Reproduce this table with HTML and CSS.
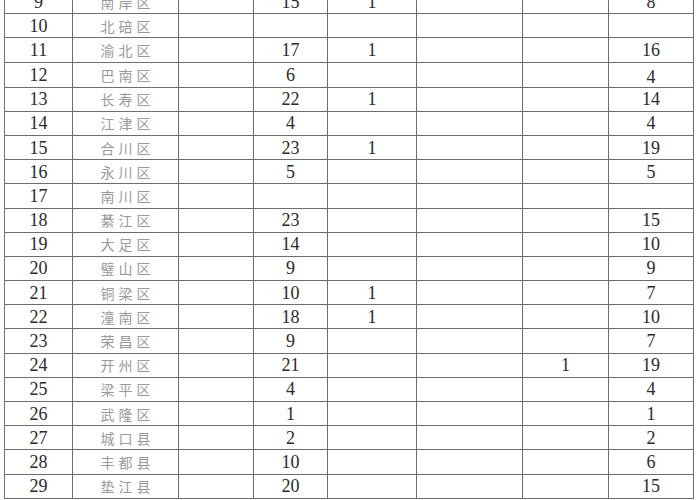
FILE: index.html
```html
<!DOCTYPE html>
<html lang="zh">
<head>
<meta charset="utf-8">
<link rel="stylesheet" href="styles.css">
</head>
<body>
<table class="grid">
<colgroup>
<col class="c-no"><col class="c-name"><col class="c-a"><col class="c-b"><col class="c-c"><col class="c-d"><col class="c-e"><col class="c-f">
</colgroup>
<tbody>
<tr><td>9</td><td class="nm">南岸区</td><td></td><td>15</td><td>1</td><td></td><td></td><td>8</td></tr>
<tr><td>10</td><td class="nm">北碚区</td><td></td><td></td><td></td><td></td><td></td><td></td></tr>
<tr><td>11</td><td class="nm">渝北区</td><td></td><td>17</td><td>1</td><td></td><td></td><td>16</td></tr>
<tr><td>12</td><td class="nm">巴南区</td><td></td><td>6</td><td></td><td></td><td></td><td class="low">4</td></tr>
<tr><td>13</td><td class="nm">长寿区</td><td></td><td>22</td><td>1</td><td></td><td></td><td>14</td></tr>
<tr><td>14</td><td class="nm">江津区</td><td></td><td>4</td><td></td><td></td><td></td><td>4</td></tr>
<tr><td>15</td><td class="nm">合川区</td><td></td><td>23</td><td>1</td><td></td><td></td><td>19</td></tr>
<tr><td>16</td><td class="nm">永川区</td><td></td><td>5</td><td></td><td></td><td></td><td>5</td></tr>
<tr><td>17</td><td class="nm">南川区</td><td></td><td></td><td></td><td></td><td></td><td></td></tr>
<tr><td>18</td><td class="nm">綦江区</td><td></td><td>23</td><td></td><td></td><td></td><td>15</td></tr>
<tr><td>19</td><td class="nm">大足区</td><td></td><td>14</td><td></td><td></td><td></td><td>10</td></tr>
<tr><td>20</td><td class="nm">璧山区</td><td></td><td>9</td><td></td><td></td><td></td><td>9</td></tr>
<tr><td>21</td><td class="nm">铜梁区</td><td></td><td>10</td><td>1</td><td></td><td></td><td>7</td></tr>
<tr><td>22</td><td class="nm">潼南区</td><td></td><td>18</td><td>1</td><td></td><td></td><td>10</td></tr>
<tr><td>23</td><td class="nm">荣昌区</td><td></td><td>9</td><td></td><td></td><td></td><td>7</td></tr>
<tr><td>24</td><td class="nm">开州区</td><td></td><td>21</td><td></td><td></td><td>1</td><td>19</td></tr>
<tr><td>25</td><td class="nm">梁平区</td><td></td><td>4</td><td></td><td></td><td></td><td>4</td></tr>
<tr><td>26</td><td class="nm">武隆区</td><td></td><td>1</td><td></td><td></td><td></td><td>1</td></tr>
<tr><td>27</td><td class="nm">城口县</td><td></td><td>2</td><td></td><td></td><td></td><td>2</td></tr>
<tr><td>28</td><td class="nm">丰都县</td><td></td><td>10</td><td></td><td></td><td></td><td>6</td></tr>
<tr><td>29</td><td class="nm">垫江县</td><td></td><td>20</td><td></td><td></td><td></td><td>15</td></tr>
</tbody>
</table>
</body>
</html>
```
FILE: styles.css
```css
html, body {
  margin: 0;
  padding: 0;
  background: #ffffff;
  overflow: hidden;
}

.grid {
  border-collapse: collapse;
  table-layout: fixed;
  width: 689px;
  margin: -11px 0 0 4px;
  font-family: "Liberation Serif", "Times New Roman", serif;
  font-size: 18px;
  color: #2b2b2b;
}

.c-no { width: 68px; }
.c-name { width: 106px; }
.c-a { width: 75px; }
.c-b { width: 74px; }
.c-c { width: 89px; }
.c-d { width: 106px; }
.c-e { width: 86px; }
.c-f { width: 85px; }

.grid td {
  border: 1px solid #6e6e6e;
  height: 24.2px;
  padding: 0;
  text-align: center;
  vertical-align: middle;
  line-height: 20px;
  box-sizing: border-box;
}

.grid td.nm {
  font-family: "Noto Sans CJK SC", "Noto Sans", sans-serif;
  font-size: 14px;
  color: #9a9a9a;
  letter-spacing: 4px;
  text-indent: 4px;
}

.grid td.low {
  padding-top: 4px;
}
```
